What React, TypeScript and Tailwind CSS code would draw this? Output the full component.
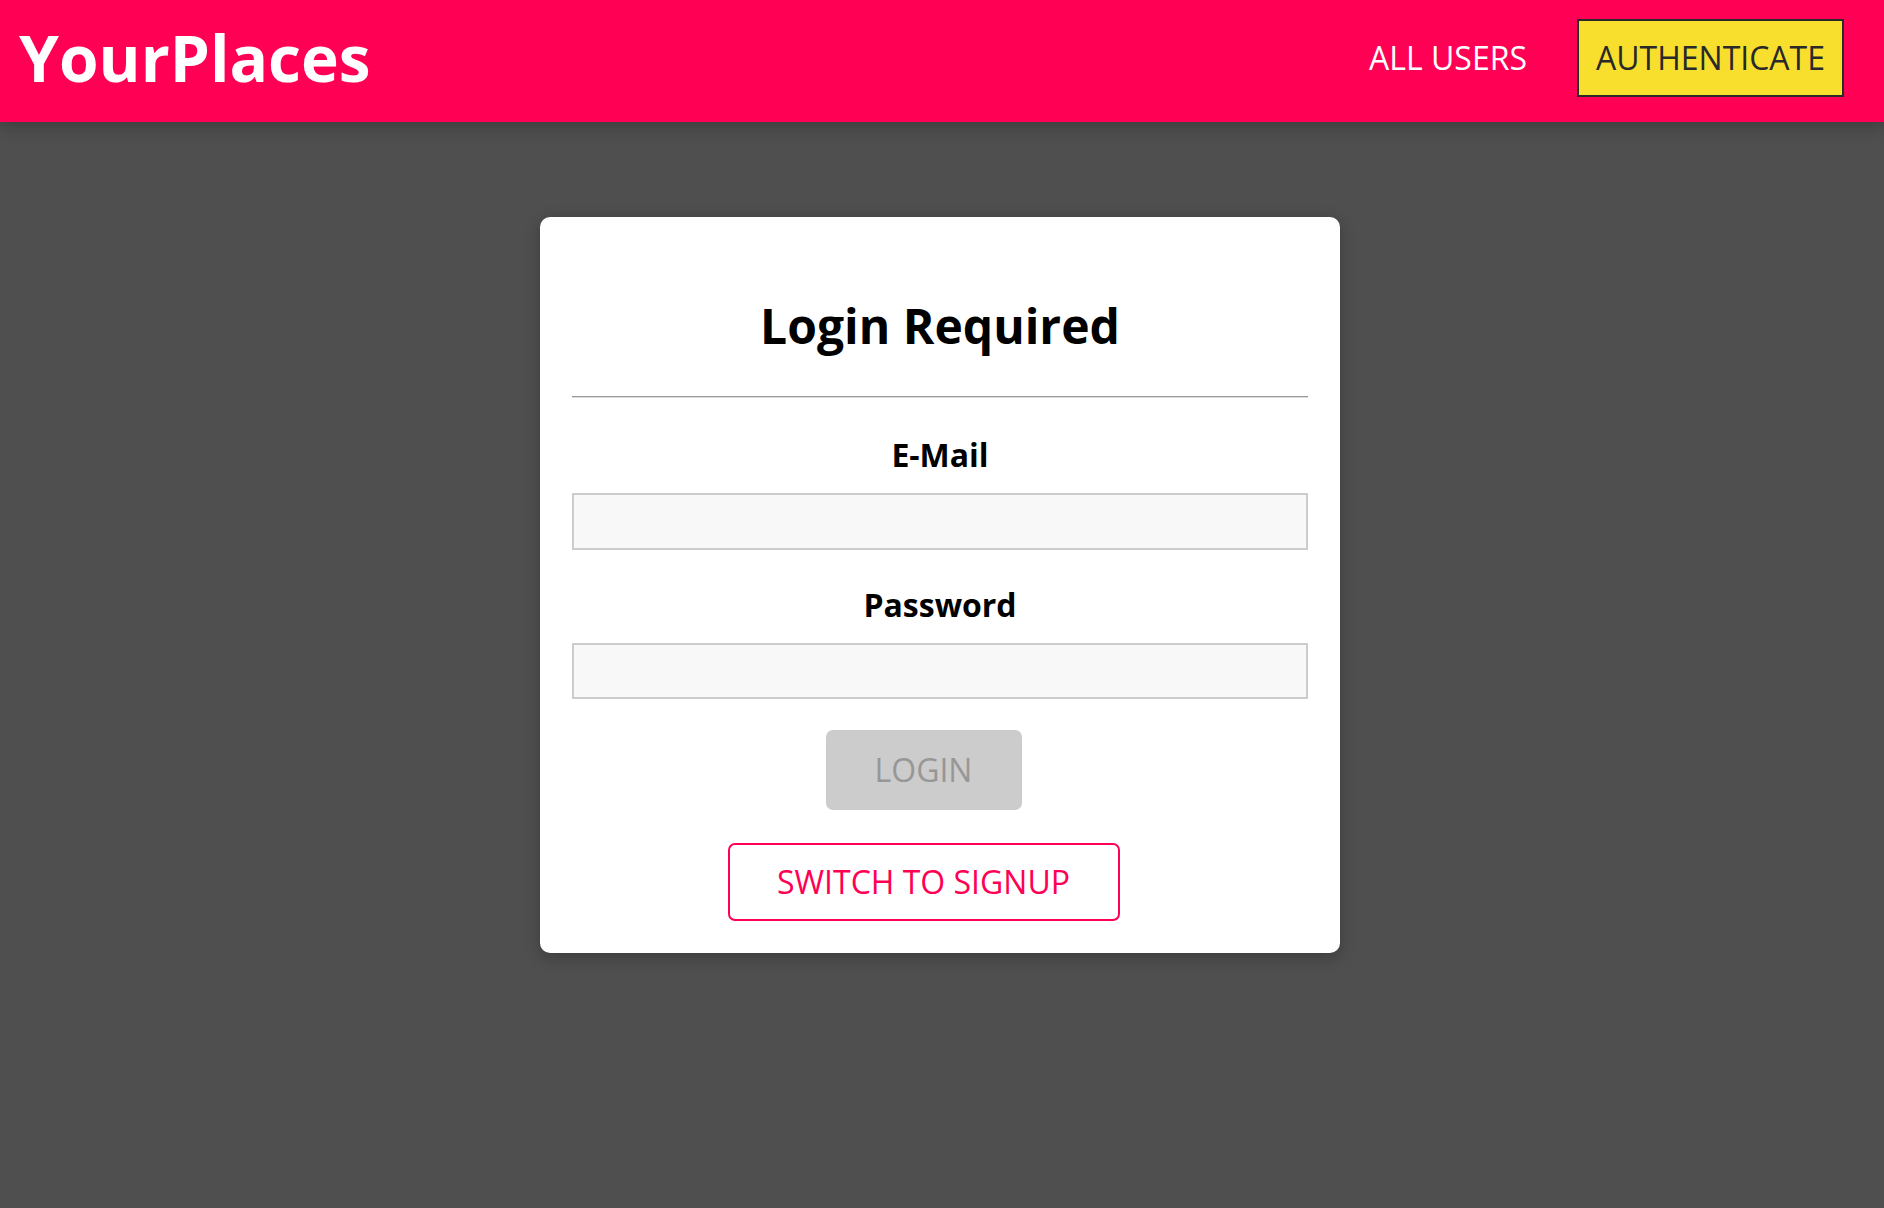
import React from "react";

function Header() {
  return (
    <header className="relative z-10 flex h-[122px] items-center justify-between bg-[#ff0055] pl-[19px] pr-[40px] shadow-[0_4px_16px_rgba(0,0,0,0.26)]">
      <h1 className="mb-[6px] text-[64px] font-bold leading-[82px] text-white">
        YourPlaces
      </h1>
      <nav className="mb-[6px] flex items-center">
        <a className="text-[32px] leading-[44px] text-white">ALL USERS</a>
        <a className="ml-[50px] flex h-[78px] items-center border-2 border-[#292929] bg-[#f8df2e] px-[17px] text-[32px] leading-[44px] text-[#292929]">
          AUTHENTICATE
        </a>
      </nav>
    </header>
  );
}

function Field({ label, first }: { label: string; first?: boolean }) {
  return (
    <div className={first ? "mt-[35px]" : "mt-[33px]"}>
      <label className="block text-[32px] font-bold leading-[44px] text-black">
        {label}
      </label>
      <input
        className={
          "mt-[16px] block w-full border-2 border-[#cccccc] bg-[#f8f8f8] outline-none " +
          (first ? "h-[57px]" : "h-[56px]")
        }
      />
    </div>
  );
}

export default function App() {
  return (
    <div
      className="min-h-[1208px] bg-[#4f4f4f]"
      style={{ fontFamily: "'Open Sans', 'Liberation Sans', sans-serif" }}
    >
      <Header />
      <main className="pr-[4px] pt-[95px]">
        <div className="mx-auto w-[800px] rounded-[10px] bg-white px-8 pb-8 pt-[76px] text-center shadow-[0_4px_16px_rgba(0,0,0,0.26)]">
          <h2 className="text-[48px] font-bold leading-[65px] text-black">
            Login Required
          </h2>
          <div className="mt-[38px] h-[2px] border-t border-b border-t-[#9a9a9a] border-b-[#dcdcdc]" />
          <form className="flex flex-col">
            <Field label="E-Mail" first />
            <Field label="Password" />
            <div className="flex flex-col items-center">
              <button
                type="button"
                disabled
                className="mr-[33px] mt-[31px] h-[80px] w-[196px] rounded-[7px] bg-[#cccccc] text-[32px] leading-[44px] text-[#979797]"
              >
                LOGIN
              </button>
              <button
                type="button"
                className="mr-[33px] mt-[33px] h-[78px] w-[392px] rounded-[7px] border-2 border-[#ff0055] bg-transparent text-[32px] leading-[44px] text-[#ff0055]"
              >
                SWITCH TO SIGNUP
              </button>
            </div>
          </form>
        </div>
      </main>
    </div>
  );
}
